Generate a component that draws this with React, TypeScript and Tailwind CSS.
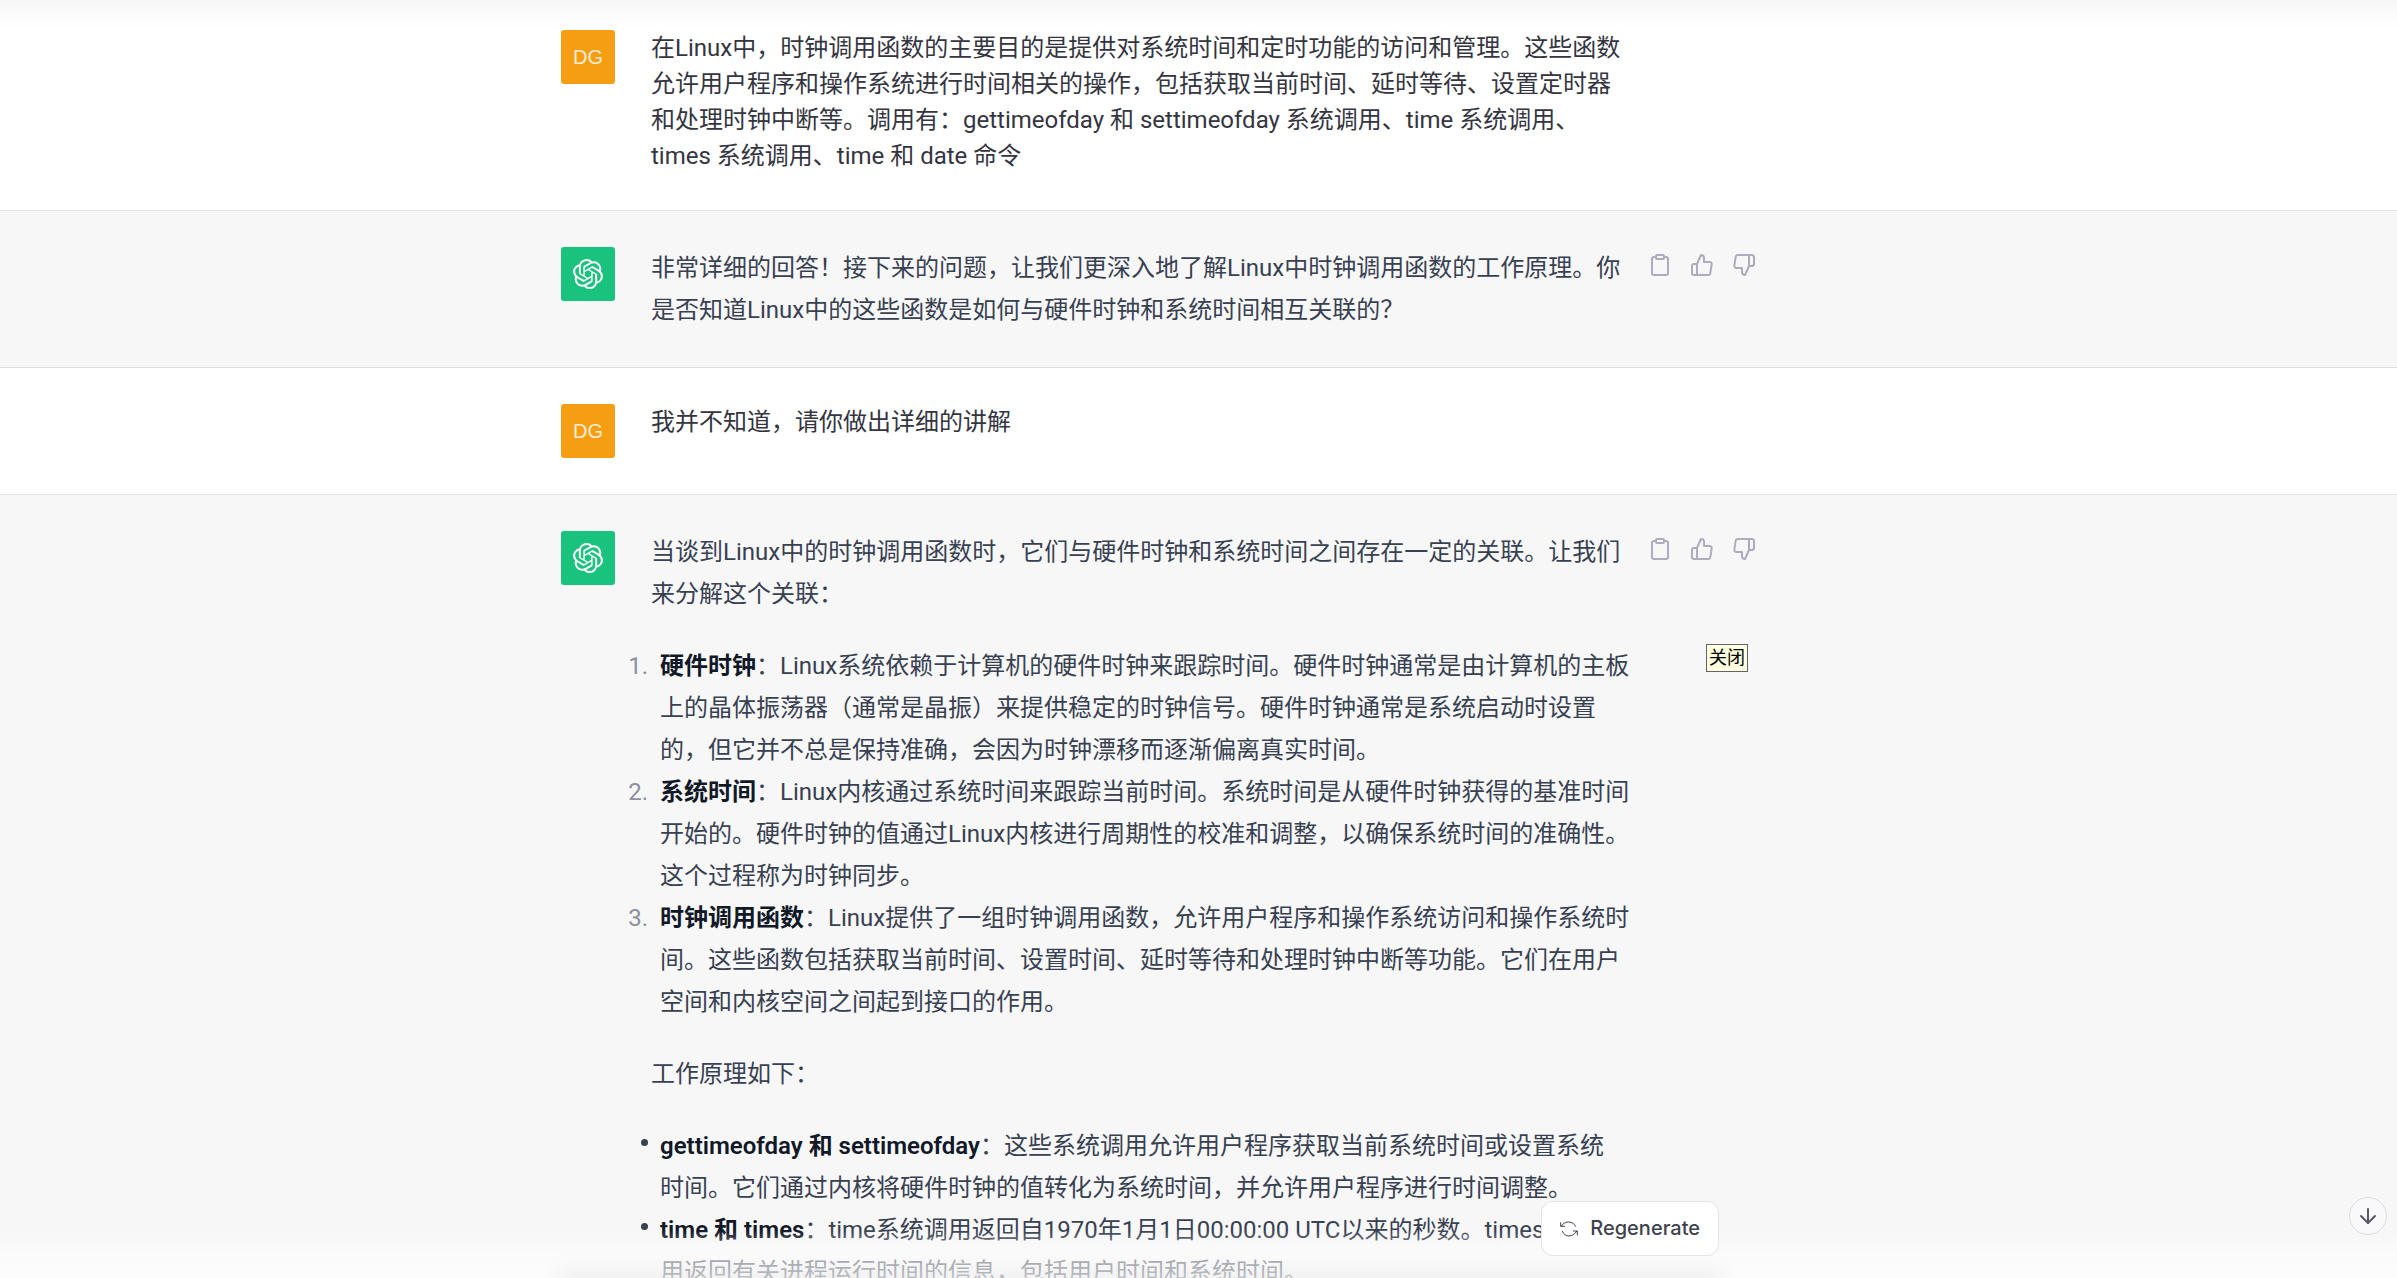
import type { ReactNode } from "react";
import { FiArrowDown, FiClipboard, FiThumbsDown, FiThumbsUp } from "react-icons/fi";
import { SiOpenai } from "react-icons/si";

interface MessageProps {
  role: "user" | "assistant";
  children: ReactNode;
}

// Keeps every entry on a row of its own
function Lines({ lines }: { lines: ReactNode[] }) {
  return (
    <>
      {lines.map((line, i) => (
        <span key={i} className="block whitespace-nowrap">
          {line}
        </span>
      ))}
    </>
  );
}

function Avatar({ role }: { role: MessageProps["role"] }) {
  if (role === "user") {
    return (
      <div className="flex size-[54px] shrink-0 items-center justify-center rounded-[3px] bg-[#f59e13] font-['Liberation_Sans'] text-[20px] text-white/80">
        DG
      </div>
    );
  }
  return (
    <div className="flex size-[54px] shrink-0 items-center justify-center rounded-[3px] bg-[#19c37d] text-white">
      <SiOpenai className="size-[30px]" />
    </div>
  );
}

function MessageActions() {
  return (
    <div className="flex shrink-0 gap-[18px] pt-[6px] text-[#acacbe]">
      <button type="button" aria-label="Copy" className="h-6">
        <FiClipboard className="size-6" />
      </button>
      <button type="button" aria-label="Good response" className="h-6">
        <FiThumbsUp className="size-6" />
      </button>
      <button type="button" aria-label="Bad response" className="h-6">
        <FiThumbsDown className="size-6" />
      </button>
    </div>
  );
}

function Message({ role, children }: MessageProps) {
  const isUser = role === "user";
  return (
    <article
      className={`border-b border-black/10 py-9 pr-20 ${
        isUser ? "bg-white leading-[36px] text-[#343541] first:pt-[30px]" : "bg-[#f7f7f8] leading-[42px] text-[#374151]"
      }`}
    >
      <div className="mx-auto flex max-w-[1195px] gap-9">
        <Avatar role={role} />
        <div className="min-w-0 flex-1">{children}</div>
        {!isUser && <MessageActions />}
      </div>
    </article>
  );
}

const strong = "font-semibold text-[#111827]";
const bullet =
  "before:float-left before:mt-[14px] before:mr-3 before:-ml-[19px] before:size-[7px] before:rounded-full before:bg-[#374151] before:content-['']";

export default function App() {
  return (
    <main className="relative h-screen overflow-hidden bg-[#f7f7f8] font-['Roboto','Noto_Sans_CJK_SC',sans-serif] text-2xl">
      <Message role="user">
        <Lines
          lines={[
            "在Linux中，时钟调用函数的主要目的是提供对系统时间和定时功能的访问和管理。这些函数",
            "允许用户程序和操作系统进行时间相关的操作，包括获取当前时间、延时等待、设置定时器",
            "和处理时钟中断等。调用有：gettimeofday 和 settimeofday 系统调用、time 系统调用、",
            "times 系统调用、time 和 date 命令",
          ]}
        />
      </Message>

      <Message role="assistant">
        <Lines
          lines={[
            "非常详细的回答！接下来的问题，让我们更深入地了解Linux中时钟调用函数的工作原理。你",
            "是否知道Linux中的这些函数是如何与硬件时钟和系统时间相互关联的？",
          ]}
        />
      </Message>

      <Message role="user">
        <p>我并不知道，请你做出详细的讲解</p>
      </Message>

      <Message role="assistant">
        <div className="space-y-[30px]">
          <p>
            <Lines lines={["当谈到Linux中的时钟调用函数时，它们与硬件时钟和系统时间之间存在一定的关联。让我们", "来分解这个关联："]} />
          </p>
          <ol className="list-decimal pl-[3px] marker:text-[#8e8ea0] [&>li]:pl-[6px]">
            <li>
              <Lines
                lines={[
                  <>
                    <strong className={strong}>硬件时钟</strong>：Linux系统依赖于计算机的硬件时钟来跟踪时间。硬件时钟通常是由计算机的主板
                  </>,
                  "上的晶体振荡器（通常是晶振）来提供稳定的时钟信号。硬件时钟通常是系统启动时设置",
                  "的，但它并不总是保持准确，会因为时钟漂移而逐渐偏离真实时间。",
                ]}
              />
            </li>
            <li>
              <Lines
                lines={[
                  <>
                    <strong className={strong}>系统时间</strong>：Linux内核通过系统时间来跟踪当前时间。系统时间是从硬件时钟获得的基准时间
                  </>,
                  "开始的。硬件时钟的值通过Linux内核进行周期性的校准和调整，以确保系统时间的准确性。",
                  "这个过程称为时钟同步。",
                ]}
              />
            </li>
            <li>
              <Lines
                lines={[
                  <>
                    <strong className={strong}>时钟调用函数</strong>：Linux提供了一组时钟调用函数，允许用户程序和操作系统访问和操作系统时
                  </>,
                  "间。这些函数包括获取当前时间、设置时间、延时等待和处理时钟中断等功能。它们在用户",
                  "空间和内核空间之间起到接口的作用。",
                ]}
              />
            </li>
          </ol>
          <p>工作原理如下：</p>
          <ul className="pl-[9px]">
            <li className={bullet}>
              <Lines
                lines={[
                  <>
                    <strong className={strong}>gettimeofday 和 settimeofday</strong>：这些系统调用允许用户程序获取当前系统时间或设置系统
                  </>,
                  "时间。它们通过内核将硬件时钟的值转化为系统时间，并允许用户程序进行时间调整。",
                ]}
              />
            </li>
            <li className={bullet}>
              <Lines
                lines={[
                  <>
                    <strong className={strong}>time 和 times</strong>：time系统调用返回自1970年1月1日00:00:00 UTC以来的秒数。times系统调
                  </>,
                  "用返回有关进程运行时间的信息，包括用户时间和系统时间。",
                ]}
              />
            </li>
          </ul>
        </div>
      </Message>

      {/* Fades over the scrolled conversation */}
      <div className="pointer-events-none absolute inset-x-0 top-0 h-[30px] bg-linear-to-b from-black/3 to-transparent" />
      <div className="pointer-events-none absolute inset-x-0 bottom-0 h-12 bg-linear-to-b from-transparent via-white/50 to-white/70" />

      <div role="tooltip" className="absolute top-[644px] left-[1706px] border border-[#646464] bg-[#ffffe1] px-[2px] text-lg leading-[26px] text-black">
        关闭
      </div>

      <div className="absolute inset-x-0 bottom-0 pr-[117px]">
        <div className="mx-auto max-w-[1158px]">
          <div className="flex justify-end pb-[22px]">
            <button
              type="button"
              className="flex h-[55px] items-center gap-3 rounded-xl border border-black/10 bg-white px-[18px] font-[Inter] text-[20px] font-medium text-[#40414f]"
            >
              <svg viewBox="0 0 54 54" className="size-[18px]" fill="none" stroke="currentColor" strokeWidth="3" strokeLinecap="round" strokeLinejoin="round">
                <path d="M2 8v11h12M40 33h12v12" />
                <path d="M4 18C9 10 17 6 26 6s17 5 21 13M7 34c4 9 11 14 20 14s17-5 23-14" />
              </svg>
              Regenerate
            </button>
          </div>
          {/* Top edge of the composer, its shadow rises into view */}
          <div className="-mb-px h-px rounded-xl shadow-[0_0_22px_4px_rgba(0,0,0,0.12)]" />
        </div>
      </div>

      <button
        type="button"
        aria-label="Scroll to bottom"
        className="absolute right-[10px] bottom-[43px] flex size-[38px] items-center justify-center rounded-full border border-[#d9d9e3] bg-[#f9f9fa] text-[#565869]"
      >
        <FiArrowDown className="size-6" />
      </button>
    </main>
  );
}
